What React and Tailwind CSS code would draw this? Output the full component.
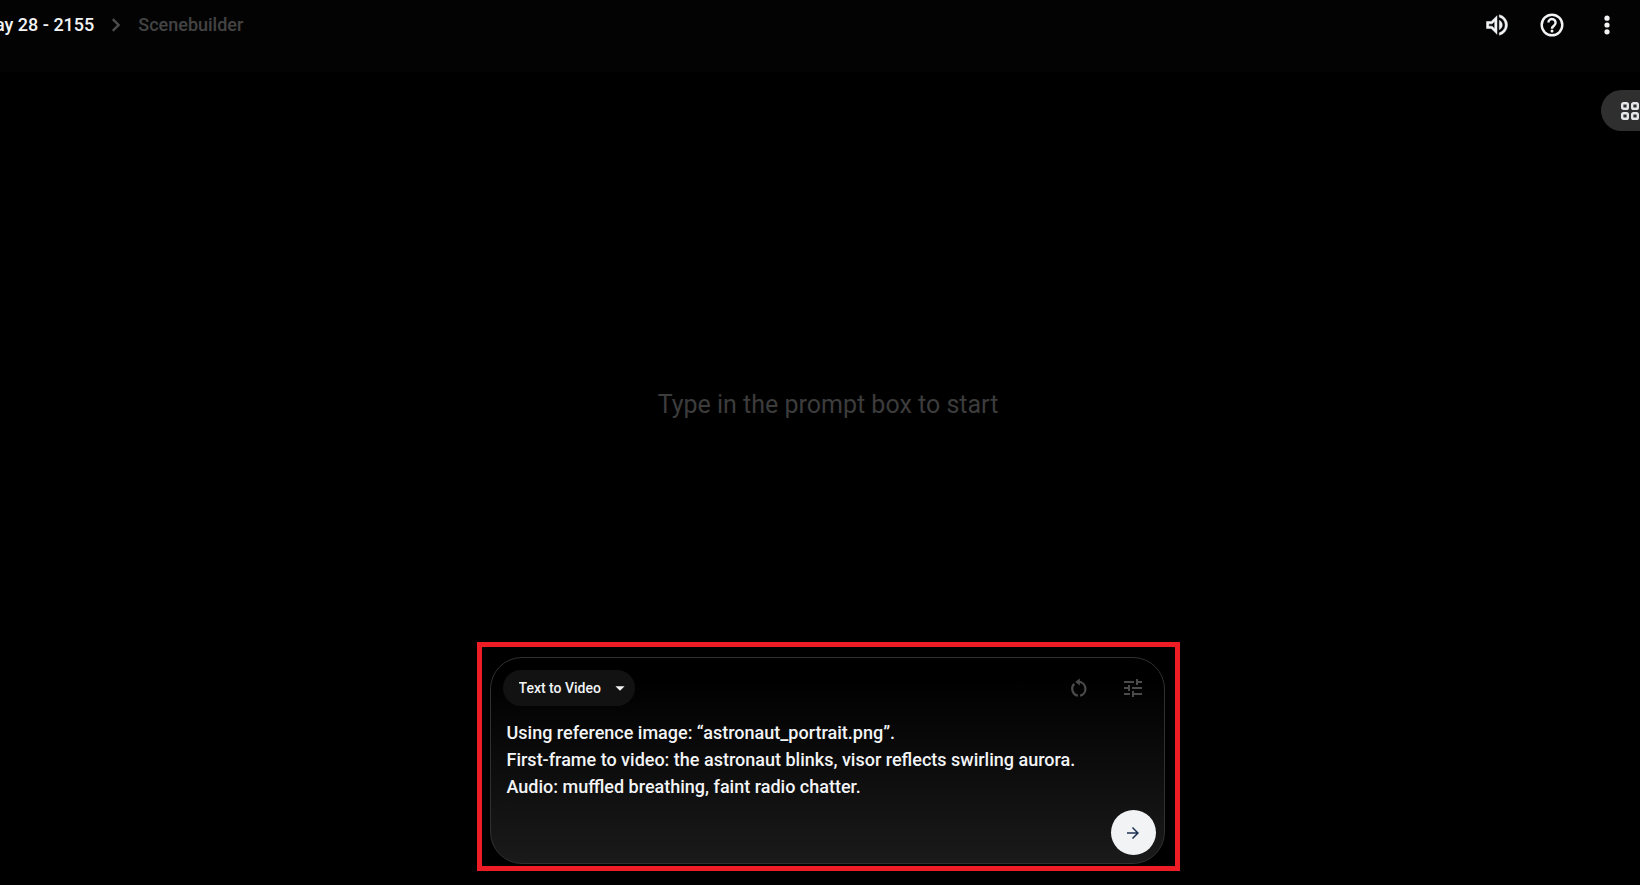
import React, { useState } from 'react';
import { MdArrowDropDown, MdArrowForward, MdTune } from 'react-icons/md';

const DEFAULT_PROMPT = `Using reference image: “astronaut_portrait.png”.
First-frame to video: the astronaut blinks, visor reflects swirling aurora.
Audio: muffled breathing, faint radio chatter.`;

function ChevronIcon() {
  return (
    <svg viewBox="0 0 24 24" className="mx-2.5 size-6 text-[#4d4d4d]" fill="none" stroke="currentColor" strokeWidth="2.4" aria-hidden="true">
      <path d="M8.8 6.2l5.8 5.8-5.8 5.8" />
    </svg>
  );
}

function VolumeIcon() {
  return (
    <svg viewBox="0 -960 960 960" className="size-7" fill="currentColor" stroke="currentColor" strokeWidth="16" aria-hidden="true">
      <path d="M560-131v-82q90-26 145-100t55-168q0-94-55-168T560-749v-82q124 28 202 125.5T840-481q0 127-78 224.5T560-131ZM120-360v-240h160l200-200v640L280-360H120Zm440 40v-322q47 22 73.5 66t26.5 96q0 51-26.5 94.5T560-320ZM400-606l-86 86H200v80h114l86 86v-252Z" />
    </svg>
  );
}

function HelpIcon() {
  return (
    <svg viewBox="0 0 28 28" className="size-7" fill="none" stroke="currentColor" strokeWidth="2.4" aria-hidden="true">
      <circle cx="14" cy="14" r="10.3" />
      <path d="M10.4 11.6a3.6 3.6 0 1 1 5.9 2.8c-1.3 1-2.3 1.700-2.3 3.300" />
      <circle cx="14" cy="20" r="1.5" fill="currentColor" stroke="none" />
    </svg>
  );
}

function MoreIcon() {
  return (
    <svg viewBox="0 0 28 28" className="size-7" fill="currentColor" aria-hidden="true">
      <circle cx="14" cy="7.2" r="2.6" />
      <circle cx="14" cy="14" r="2.6" />
      <circle cx="14" cy="20.8" r="2.6" />
    </svg>
  );
}

// Four rounded tiles
function TilesIcon() {
  return (
    <svg viewBox="0 0 18 18" className="size-[18px]" fill="none" stroke="currentColor" strokeWidth="2.4" aria-hidden="true">
      <rect x="1.2" y="1.2" width="5.6" height="5.6" rx="1.4" />
      <rect x="11.2" y="1.2" width="5.6" height="5.6" rx="1.4" />
      <rect x="1.2" y="11.2" width="5.6" height="5.6" rx="1.4" />
      <rect x="11.2" y="11.2" width="5.6" height="5.6" rx="1.4" />
    </svg>
  );
}

// Circular arrow with a small break at the bottom
function ResetIcon() {
  return (
    <svg viewBox="0 0 20 20" className="size-5" fill="none" stroke="currentColor" strokeWidth="2.3" aria-hidden="true">
      <path d="M5.3 5.9A7 7 0 0 0 8.9 17.7" />
      <path d="M11.1 17.7A7 7 0 0 0 9.6 3.9" />
      <path d="M10.8 0.4v7.200L6.200 4z" fill="currentColor" stroke="none" />
    </svg>
  );
}

function Header() {
  return (
    <header className="flex h-[72px] items-start justify-between bg-[#030303] pr-[19px]">
      <nav aria-label="Breadcrumb" className="-ml-[5px] flex h-[50px] items-center text-lg font-medium">
        <a href="#project" className="whitespace-nowrap text-gray-100">ay 28 - 2155</a>
        <ChevronIcon />
        <a href="#scenebuilder" className="text-[#434343]">Scenebuilder</a>
      </nav>
      <div className="flex h-[50px] items-center gap-[27px] text-gray-100">
        <button type="button" aria-label="Sound"><VolumeIcon /></button>
        <button type="button" aria-label="Help"><HelpIcon /></button>
        <button type="button" aria-label="More options"><MoreIcon /></button>
      </div>
    </header>
  );
}

function PromptBox() {
  const [prompt, setPrompt] = useState(DEFAULT_PROMPT);

  return (
    <section className="w-full max-w-[703px] border-5 border-[#ee1c24] pt-2.5 pr-2.5 pb-0.5 pl-2">
      <form
        onSubmit={(e) => e.preventDefault()}
        className="flex flex-col rounded-[32px] border border-[#303030] bg-linear-to-b/srgb from-black from-10% to-[#1a1a1a] pt-3 pr-2 pb-2 pl-3"
      >
        <div className="flex items-center justify-between pr-[11px]">
          <div className="relative flex items-center">
            <select
              aria-label="Mode"
              className="h-9 w-[132px] appearance-none rounded-full bg-[#121212] pl-4 text-sm font-medium text-gray-100"
            >
              <option>Text to Video</option>
            </select>
            <MdArrowDropDown size={22} className="pointer-events-none absolute right-1 text-gray-100" />
          </div>
          <div className="flex items-center gap-8 text-[#4a4a4a]">
            <button type="button" aria-label="Reset"><ResetIcon /></button>
            <button type="button" aria-label="Settings"><MdTune size={24} /></button>
          </div>
        </div>
        <textarea
          aria-label="Prompt"
          rows={3}
          value={prompt}
          onChange={(e) => setPrompt(e.target.value)}
          className="mt-[13px] block w-full resize-none overflow-hidden bg-transparent pl-1 text-lg leading-[27px] font-medium text-gray-100 outline-none"
        />
        <button
          type="submit"
          aria-label="Generate"
          className="mt-2.5 flex size-[45px] items-center justify-center self-end rounded-full bg-[#f1f3f4] text-[#1f3354]"
        >
          <MdArrowForward size={18} />
        </button>
      </form>
    </section>
  );
}

export default function App() {
  return (
    <div className="relative flex min-h-screen flex-col overflow-hidden bg-black font-['Roboto',sans-serif]">
      <Header />
      <button
        type="button"
        aria-label="Grid view"
        className="absolute top-[90px] right-0 flex h-[41px] items-center rounded-l-full bg-[#2f2f2f] pr-px pl-5 text-gray-200"
      >
        <TilesIcon />
      </button>
      <main className="flex flex-1 flex-col items-center pb-3.5 pl-4">
        <div className="flex flex-1 items-center pt-24">
          <h1 className="text-[25px] text-[#3c3c3c]">Type in the prompt box to start</h1>
        </div>
        <PromptBox />
      </main>
    </div>
  );
}
